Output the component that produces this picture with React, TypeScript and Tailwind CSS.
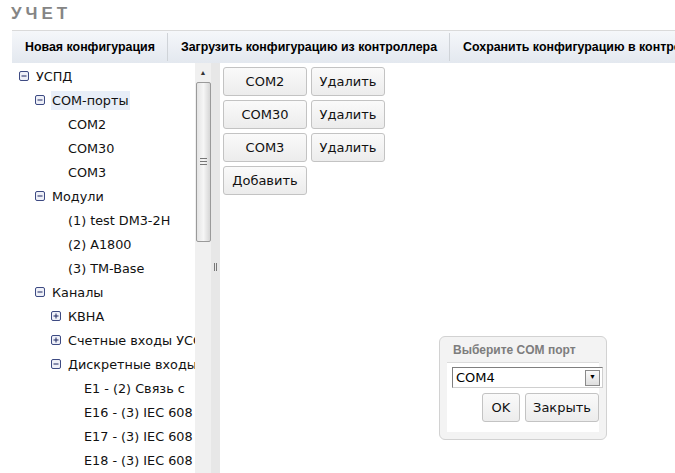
import React from 'react';

type Node = {
  label: string;
  level: number;
  toggle?: 'minus' | 'plus';
  selected?: boolean;
};

const tree: Node[] = [
  { label: 'УСПД', level: 0, toggle: 'minus' },
  { label: 'COM-порты', level: 1, toggle: 'minus', selected: true },
  { label: 'COM2', level: 2 },
  { label: 'COM30', level: 2 },
  { label: 'COM3', level: 2 },
  { label: 'Модули', level: 1, toggle: 'minus' },
  { label: '(1) test DM3-2H', level: 2 },
  { label: '(2) A1800', level: 2 },
  { label: '(3) TM-Base', level: 2 },
  { label: 'Каналы', level: 1, toggle: 'minus' },
  { label: 'КВНА', level: 2, toggle: 'plus' },
  { label: 'Счетные входы УСО', level: 2, toggle: 'plus' },
  { label: 'Дискретные входы', level: 2, toggle: 'minus' },
  { label: 'E1 - (2) Связь с', level: 3 },
  { label: 'E16 - (3) IEC 608', level: 3 },
  { label: 'E17 - (3) IEC 608', level: 3 },
  { label: 'E18 - (3) IEC 608', level: 3 },
];

const ports = ['COM2', 'COM30', 'COM3'];

const btn =
  "h-[29px] shrink-0 rounded-[3px] border border-[#c3c3c3] bg-gradient-to-b from-[#fafafa] to-[#ececec] text-[13px] text-[#111] font-['DejaVu_Sans',sans-serif] flex items-center justify-center";

function Toggle({ kind }: { kind: 'minus' | 'plus' }) {
  return (
    <svg width="10" height="10" viewBox="0 0 10 10" className="shrink-0">
      <rect x="0.5" y="0.5" width="9" height="9" rx="1.5" fill="#eef0f8" stroke="#3d4a82" />
      <line x1="2.5" y1="5" x2="7.5" y2="5" stroke="#1d2660" strokeWidth="1" />
      {kind === 'plus' && <line x1="5" y1="2.5" x2="5" y2="7.5" stroke="#1d2660" strokeWidth="1" />}
    </svg>
  );
}

function TreeRow({ node }: { node: Node }) {
  const iconLeft = 7 + node.level * 16;
  return (
    <div className="h-[24px] flex items-center whitespace-nowrap" style={{ paddingLeft: iconLeft }}>
      <div className="w-[16px] shrink-0 flex items-center">{node.toggle && <Toggle kind={node.toggle} />}</div>
      <span
        className={
          'shrink-0 px-[1px] leading-[19px] ' + (node.selected ? 'bg-[#e8eef8]' : '')
        }
      >
        {node.label}
      </span>
    </div>
  );
}

export default function App() {
  return (
    <div className="w-[675px] h-[473px] overflow-hidden bg-white relative font-['Liberation_Sans',Arial,sans-serif]">
      <div className="h-[30px] pl-[11px] pt-[4px] text-[17px] font-bold tracking-[4px] text-[#858585] leading-[20px]">
        УЧЕТ
      </div>

      <div className="ml-[12px] h-[33px] flex items-center border-t border-[#dadada] bg-gradient-to-b from-[#f5f7fa] to-[#e3e8ef] whitespace-nowrap text-[12.4px] font-bold text-black">
        <div className="shrink-0 pl-[13px] pr-[12px]">Новая конфигурация</div>
        <div className="shrink-0 w-px h-[28px] bg-[#cfd3d8]" />
        <div className="shrink-0 pl-[13px] pr-[12px]">Загрузить конфигурацию из контроллера</div>
        <div className="shrink-0 w-px h-[28px] bg-[#cfd3d8]" />
        <div className="shrink-0 pl-[13px] pr-[12px]">Сохранить конфигурацию в контроллер</div>
      </div>

      <div className="ml-[12px] h-[410px] flex">
        <div className="w-[183px] shrink-0 overflow-hidden pt-[1px] text-[12.8px] text-[#111] font-['DejaVu_Sans',sans-serif]">
          {tree.map((n, i) => (
            <TreeRow key={i} node={n} />
          ))}
        </div>

        <div className="w-[16px] shrink-0 bg-[#f0f0f0] flex flex-col items-center">
          <div className="h-[19px] flex items-center justify-center text-[7px] text-[#333] pt-[1px]">▲</div>
          <div className="w-[15px] h-[160px] border border-[#9a9a9a] rounded-[2px] bg-gradient-to-r from-[#e4e4e4] via-[#f6f6f6] to-[#d6d6d6] flex items-center justify-center">
            <div className="flex flex-col gap-[2px] mt-[-2px]">
              <div className="w-[7px] h-px bg-[#777]" />
              <div className="w-[7px] h-px bg-[#777]" />
              <div className="w-[7px] h-px bg-[#777]" />
            </div>
          </div>
        </div>

        <div className="w-[9px] shrink-0 bg-[#e7e7e7] flex items-center justify-center">
          <div className="flex gap-[1px] mt-[-3px]">
            <div className="w-px h-[8px] bg-[#777]" />
            <div className="w-px h-[8px] bg-[#777]" />
          </div>
        </div>

        <div className="flex-1 pl-[3px] pt-[4px] flex flex-col gap-[4px]">
          {ports.map((p) => (
            <div key={p} className="flex gap-[4px]">
              <div className={btn + ' w-[84px]'}>{p}</div>
              <div className={btn + ' w-[74px]'}>Удалить</div>
            </div>
          ))}
          <div className={btn + ' w-[84px]'}>Добавить</div>
        </div>
      </div>

      <div className="absolute left-[439px] top-[336px] w-[168px] h-[104px] rounded-[6px] border border-[#d2d2d2] bg-[#f3f3f3] px-[7px] pb-[7px] flex flex-col">
        <div className="h-[26px] flex items-center pl-[6px] text-[12px] font-bold text-[#7d7d7d] border-b border-[#dcdcdc]">
          Выберите COM порт
        </div>
        <div className="flex-1 bg-white flex flex-col pl-[5px] pt-[4px]">
          <div className="h-[21px] w-[151px] border border-[#7f7f7f] border-r-[#cfcfcf] border-b-[#cfcfcf] flex items-center justify-between pr-[2px] bg-white">
            <span className="pl-[3px] text-[13px] text-black font-['DejaVu_Sans',sans-serif]">COM4</span>
            <div className="w-[15px] h-[16px] border border-[#8a8a8a] bg-gradient-to-b from-[#fafafa] to-[#dedede] flex items-center justify-center text-[7px] text-black">
              ▼
            </div>
          </div>
          <div className="flex justify-end gap-[5px] mt-[5px] pr-[0px]">
            <div className={btn + ' w-[38px]'}>OK</div>
            <div className={btn + ' w-[74px]'}>Закрыть</div>
          </div>
        </div>
      </div>
    </div>
  );
}
